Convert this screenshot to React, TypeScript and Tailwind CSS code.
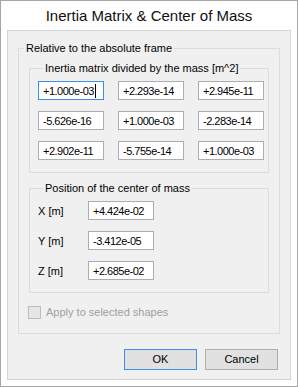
import React from "react";

const matrix = [
  ["+1.000e-03", "+2.293e-14", "+2.945e-11"],
  ["-5.626e-16", "+1.000e-03", "-2.283e-14"],
  ["+2.902e-11", "-5.755e-14", "+1.000e-03"],
];

const position = [
  { label: "X [m]", value: "+4.424e-02" },
  { label: "Y [m]", value: "-3.412e-05" },
  { label: "Z [m]", value: "+2.685e-02" },
];

const Field = ({ value, focused }: { value: string; focused?: boolean }) => (
  <div
    className={
      "w-[66px] h-[19px] bg-white border flex items-center pl-[4px] whitespace-nowrap overflow-hidden tracking-[-0.5px] " +
      (focused ? "border-[#3d8ee8]" : "border-[#abadb3]")
    }
  >
    {value}
    {focused && <span className="w-px h-[14px] bg-black ml-[1px]" />}
  </div>
);

export default function App() {
  return (
    <div className="w-[298px] h-[387px] bg-white border border-[#a6a6a6] flex flex-col font-['Liberation_Sans',Arial,sans-serif] text-[11px] leading-[16px] text-black">
      <div className="h-[29px] flex items-center justify-center text-[15px] leading-[29px] text-[#111]">
        Inertia Matrix &amp; Center of Mass
      </div>

      <div className="mx-[6px] mb-[6px] flex-1 bg-[#f0f0f0] border border-[#d5d5d5] flex flex-col">
        <fieldset className="mx-[10px] mt-[9px] border border-[#dcdcdc] pb-[13px]">
          <legend className="ml-[5px] px-[2px]">Relative to the absolute frame</legend>

          <fieldset className="mx-[10px] mt-[4px] border border-[#dcdcdc] pt-[5px] pb-[12px] pl-[8px]">
            <legend className="ml-[5px] px-[2px]">Inertia matrix divided by the mass [m^2]</legend>
            <div className="grid grid-cols-[66px_66px_66px] gap-x-[14px] gap-y-[11px]">
              {matrix.map((row, i) =>
                row.map((v, j) => <Field key={i + "-" + j} value={v} focused={i === 0 && j === 0} />)
              )}
            </div>
          </fieldset>

          <fieldset className="mx-[10px] mt-[7px] border border-[#dcdcdc] pt-[5px] pb-[12px] pl-[8px]">
            <legend className="ml-[5px] px-[2px]">Position of the center of mass</legend>
            <div className="flex flex-col gap-[11px]">
              {position.map((p) => (
                <div key={p.label} className="flex items-center">
                  <div className="w-[50px]">{p.label}</div>
                  <Field value={p.value} />
                </div>
              ))}
            </div>
          </fieldset>

          <div className="flex items-center ml-[9px] mt-[11px]">
            <div className="w-[13px] h-[13px] border border-[#bcbcbc] bg-[#e6e6e6]" />
            <span className="ml-[5px] text-[#a0a0a0]">Apply to selected shapes</span>
          </div>
        </fieldset>

        <div className="flex justify-end gap-[8px] mt-[15px] pr-[12px]">
          <button className="w-[73px] h-[21px] bg-[#e1e1e1] border border-[#3d8ee8] leading-none">OK</button>
          <button className="w-[73px] h-[21px] bg-[#e1e1e1] border border-[#adadad] leading-none">Cancel</button>
        </div>
      </div>
    </div>
  );
}
